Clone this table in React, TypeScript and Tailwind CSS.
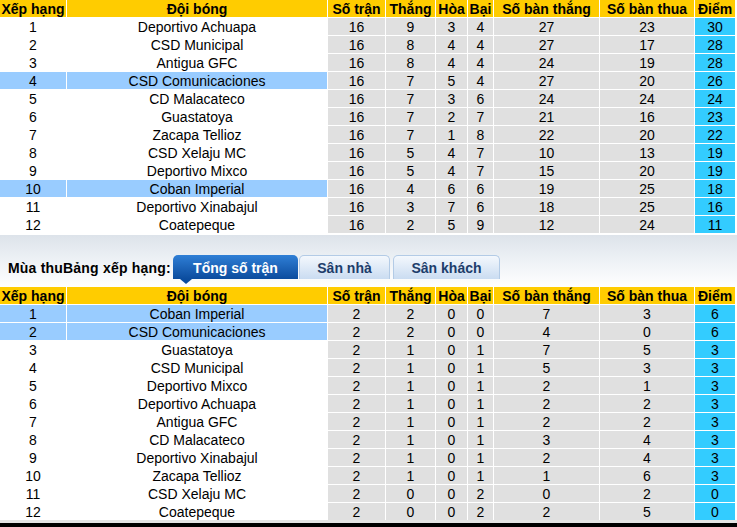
type Team = [number, string, number, number, number, number, number, number, number];

const season: Team[] = [
  [1, "Deportivo Achuapa", 16, 9, 3, 4, 27, 23, 30],
  [2, "CSD Municipal", 16, 8, 4, 4, 27, 17, 28],
  [3, "Antigua GFC", 16, 8, 4, 4, 24, 19, 28],
  [4, "CSD Comunicaciones", 16, 7, 5, 4, 27, 20, 26],
  [5, "CD Malacateco", 16, 7, 3, 6, 24, 24, 24],
  [6, "Guastatoya", 16, 7, 2, 7, 21, 16, 23],
  [7, "Zacapa Tellioz", 16, 7, 1, 8, 22, 20, 22],
  [8, "CSD Xelaju MC", 16, 5, 4, 7, 10, 13, 19],
  [9, "Deportivo Mixco", 16, 5, 4, 7, 15, 20, 19],
  [10, "Coban Imperial", 16, 4, 6, 6, 19, 25, 18],
  [11, "Deportivo Xinabajul", 16, 3, 7, 6, 18, 25, 16],
  [12, "Coatepeque", 16, 2, 5, 9, 12, 24, 11],
];

const autumn: Team[] = [
  [1, "Coban Imperial", 2, 2, 0, 0, 7, 3, 6],
  [2, "CSD Comunicaciones", 2, 2, 0, 0, 4, 0, 6],
  [3, "Guastatoya", 2, 1, 0, 1, 7, 5, 3],
  [4, "CSD Municipal", 2, 1, 0, 1, 5, 3, 3],
  [5, "Deportivo Mixco", 2, 1, 0, 1, 2, 1, 3],
  [6, "Deportivo Achuapa", 2, 1, 0, 1, 2, 2, 3],
  [7, "Antigua GFC", 2, 1, 0, 1, 2, 2, 3],
  [8, "CD Malacateco", 2, 1, 0, 1, 3, 4, 3],
  [9, "Deportivo Xinabajul", 2, 1, 0, 1, 2, 4, 3],
  [10, "Zacapa Tellioz", 2, 1, 0, 1, 1, 6, 3],
  [11, "CSD Xelaju MC", 2, 0, 0, 2, 0, 2, 0],
  [12, "Coatepeque", 2, 0, 0, 2, 2, 5, 0],
];

// column widths, 1px white gap between each
const widths = ["w-[66px]", "w-[260px]", "w-[57px]", "w-[49px]", "w-[31px]", "w-[25px]", "w-[105px]", "w-[94px]", "w-[40px]"];
const heads = ["Xếp hạng", "Đội bóng", "Số trận", "Thắng", "Hòa", "Bại", "Số bàn thắng", "Số bàn thua", "Điểm"];

function HeaderRow() {
  return (
    <div className="flex h-[17px] gap-px">
      {heads.map((h, i) => (
        <div
          key={h}
          className={`${widths[i]} shrink-0 overflow-hidden whitespace-nowrap bg-[#ffcc00] text-center text-[14px] font-bold leading-[18px]`}
        >
          {h}
        </div>
      ))}
    </div>
  );
}

function TeamRow({ team, highlight }: { team: Team; highlight: boolean }) {
  return (
    <div className="flex h-[17px] gap-px">
      {team.map((v, i) => {
        let bg = "bg-[#e0e0e0]";
        if (i < 2) bg = highlight ? "bg-[#99ccff]" : "bg-white";
        if (i === 8) bg = "bg-[#33ccff]";
        return (
          <div
            key={i}
            className={`${widths[i]} ${bg} shrink-0 overflow-hidden whitespace-nowrap text-center text-[14px] leading-[19px]`}
          >
            {v}
          </div>
        );
      })}
    </div>
  );
}

function Standings({ rows, marked }: { rows: Team[]; marked: number[] }) {
  return (
    <div className="flex w-[735px] flex-col gap-px bg-white">
      <HeaderRow />
      {rows.map((t) => (
        <TeamRow key={t[0]} team={t} highlight={marked.includes(t[0])} />
      ))}
    </div>
  );
}

export default function App() {
  return (
    <div className="h-[527px] w-[737px] overflow-hidden bg-white text-black [font-family:'Liberation_Sans',Arial,sans-serif]">
      <Standings rows={season} marked={[4, 10]} />

      {/* tab strip */}
      <div className="h-[54px] pt-[2px]">
        <div className="flex h-[52px] items-end bg-gradient-to-b from-[#dde3ea] via-[#eef2f6] to-white pb-[8px] pl-[8px]">
          <div className="flex h-[24px] w-[165px] items-center pt-[2px] text-[14px] font-bold tracking-[0.2px]">Mùa thuBảng xếp hạng:</div>
          <div className="relative flex h-[24px] w-[125px] items-center justify-center rounded-t-[5px] bg-gradient-to-b from-[#2f7fd6] to-[#0b4c9e] pt-[2px] text-[14px] font-bold text-white">
            Tổng số trận
            <span className="absolute left-[7px] top-[24px] h-0 w-0 border-x-[6px] border-t-[5px] border-x-transparent border-t-[#0b4c9e]" />
          </div>
          <div className="ml-px flex h-[24px] w-[91px] items-center justify-center rounded-t-[5px] border border-b-0 border-[#b3cbe6] bg-gradient-to-b from-[#f4f8fd] to-[#cadcf1] pt-[2px] text-[14px] font-bold text-[#1d3d6b]">
            Sân nhà
          </div>
          <div className="ml-[3px] flex h-[24px] w-[107px] items-center justify-center rounded-t-[5px] border border-b-0 border-[#b3cbe6] bg-gradient-to-b from-[#f4f8fd] to-[#cadcf1] pt-[2px] text-[14px] font-bold text-[#1d3d6b]">
            Sân khách
          </div>
        </div>
      </div>

      <Standings rows={autumn} marked={[1, 2]} />
      <div className="h-[3px] bg-[#e4e4e4]" />
      <div className="h-[6px] bg-black" />
    </div>
  );
}
